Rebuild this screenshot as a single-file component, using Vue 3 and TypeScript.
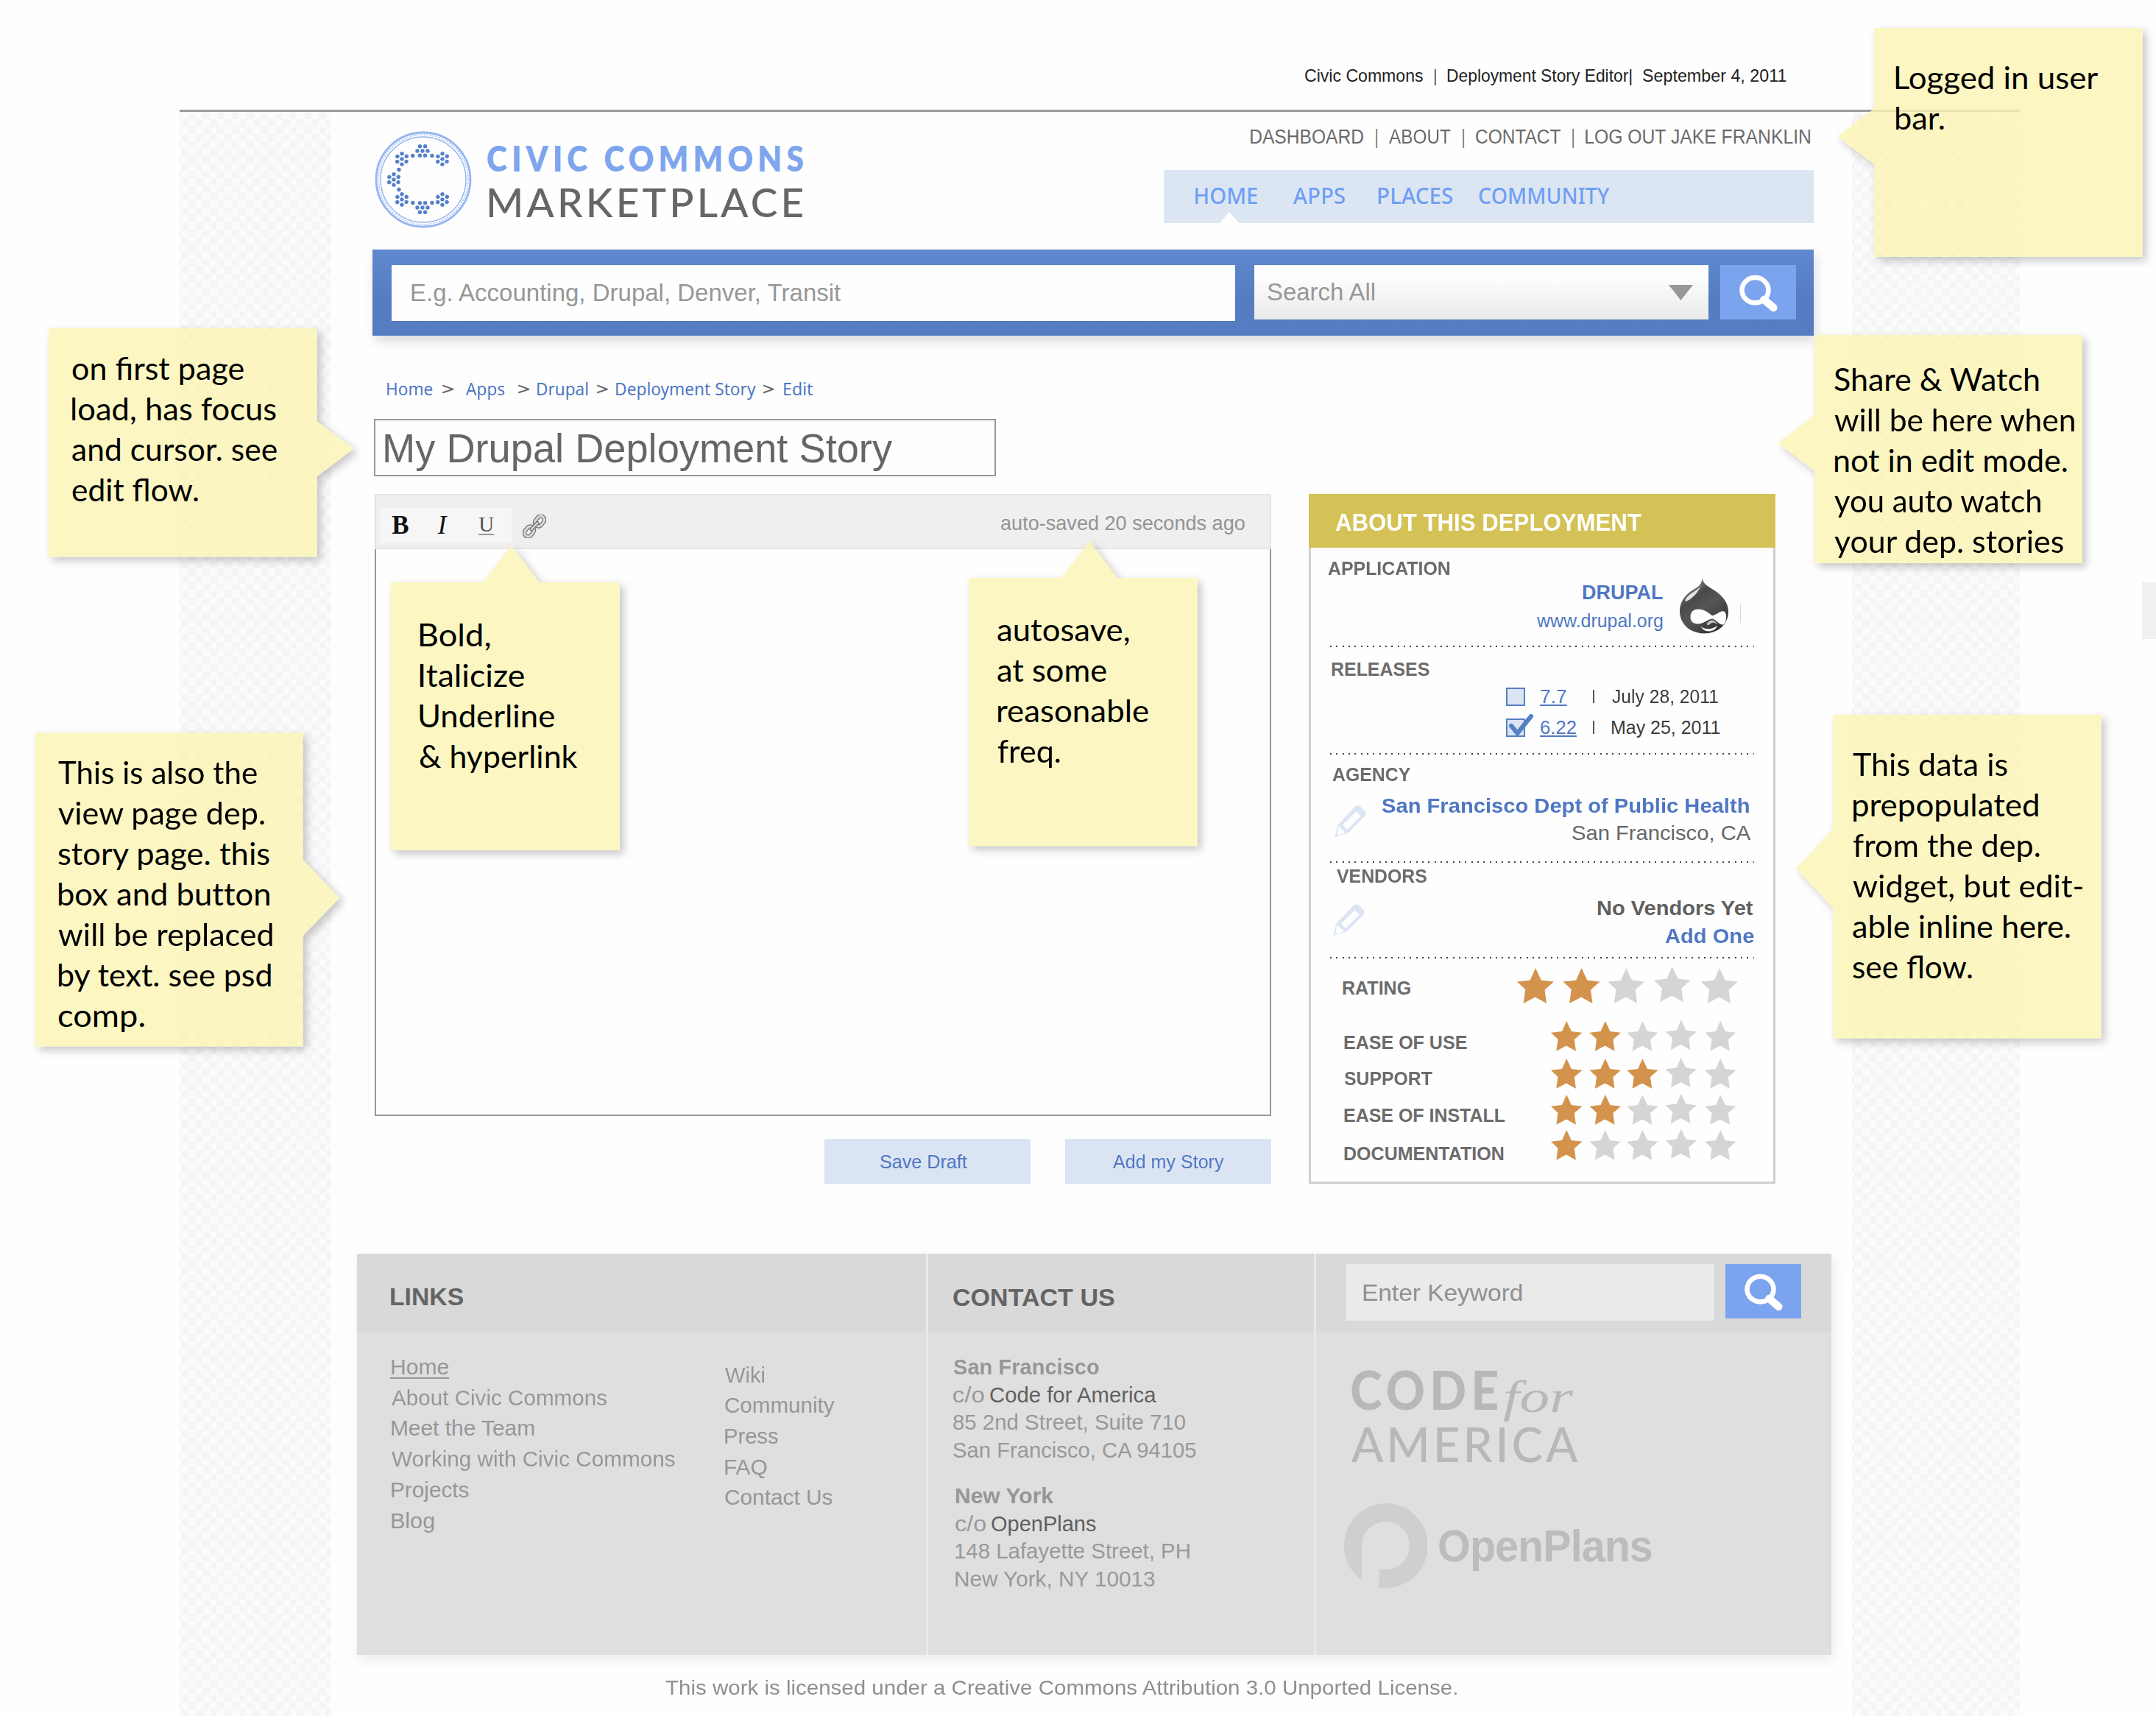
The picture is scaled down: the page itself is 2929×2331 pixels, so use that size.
<script setup lang="ts">
import { defineComponent, h, type Directive } from 'vue'

// Stretches a line of text so that its visible glyphs span exactly the given width.
const ctx = document.createElement('canvas').getContext('2d')!
const vFit: Directive<HTMLElement, number> = {
  mounted(el, { value }) {
    const cs = getComputedStyle(el)
    ctx.font = `${cs.fontStyle} ${cs.fontWeight} ${cs.fontSize} ${cs.fontFamily}`
    ctx.letterSpacing = cs.letterSpacing === 'normal' ? '0px' : cs.letterSpacing
    const m = ctx.measureText((el.textContent ?? '').trim())
    const ink = m.actualBoundingBoxLeft + m.actualBoundingBoxRight
    const s = value / ink
    const natural = el.offsetWidth
    el.style.marginRight = `${value - natural}px`
    el.style.transform = `translateX(${m.actualBoundingBoxLeft * s}px) scaleX(${s})`
  },
}

interface Note {
  x: number; y: number; w: number; h: number
  side: 'left' | 'right' | 'top'
  at: number; half: number
  tx: number; ty: number
  lines: [string, number][]
}

const notes: Note[] = [
  { x: 2546, y: 38, w: 364.5, h: 311, side: 'left', at: 147.3, half: 37.7, tx: 29, ty: 40, lines: [['Logged in user', 275], ['bar.', 66]] },
  { x: 2465, y: 455, w: 364, h: 310, side: 'left', at: 147, half: 37.5, tx: 27, ty: 32.5, lines: [['Share & Watch', 278], ['will be here when', 327], ['not in edit mode.', 316], ['you auto watch', 281], ['your dep. stories', 312]] },
  { x: 2489.7, y: 971.4, w: 364.5, h: 439.6, side: 'left', at: 208.6, half: 53.4, tx: 27, ty: 40, lines: [['This data is', 210], ['prepopulated', 252], ['from the dep.', 254], ['widget, but edit-', 312], ['able inline here.', 295], ['see flow.', 162]] },
  { x: 65.7, y: 446.4, w: 364.6, h: 310.4, side: 'right', at: 163.6, half: 37.7, tx: 32.5, ty: 27, lines: [['on first page', 233], ['load, has focus', 277], ['and cursor. see', 278], ['edit flow.', 171]] },
  { x: 48, y: 995, w: 363.5, h: 426.5, side: 'right', at: 224.5, half: 51.7, tx: 31, ty: 27, lines: [['This is also the', 270], ['view page dep.', 281], ['story page. this', 288], ['box and but\u200cton', 287], ['will be replaced', 291], ['by text. see psd', 290], ['comp.', 117]] },
  { x: 531, y: 791, w: 311, h: 364, side: 'top', at: 163.5, half: 38, tx: 38.5, ty: 43.5, lines: [['Bold,', 96], ['Italicize', 142], ['Underline', 183], ['& hyperlink', 215]] },
  { x: 1316, y: 784.7, w: 310.7, h: 364.3, side: 'top', at: 164, half: 38, tx: 39.3, ty: 43.5, lines: [['autosave,', 179], ['at some', 148], ['reasonable', 205], ['freq.', 85]] },
]

const PAD = 60
const ARROW = 50
function outline(n: Note): string {
  const l = PAD, t = PAD, r = PAD + n.w, b = PAD + n.h
  const a = PAD + n.at
  if (n.side === 'left') return `M${l} ${t}H${r}V${b}H${l}V${a + n.half}L${l - ARROW} ${a}L${l} ${a - n.half}Z`
  if (n.side === 'right') return `M${l} ${t}H${r}V${a - n.half}L${r + ARROW} ${a}L${r} ${a + n.half}V${b}H${l}Z`
  return `M${l} ${t}H${a - n.half}L${a} ${t - ARROW}L${a + n.half} ${t}H${r}V${b}H${l}Z`
}

const crumbs: [string, number, number][] = [
  ['Home', 62, 1], ['>', 16, 12.7], ['Apps', 53, 16], ['>', 16, 17.5], ['Drupal', 69, 10],
  ['>', 15.5, 11], ['Deployment Story', 189.5, 11], ['>', 15, 10], ['Edit', 39, 12.5],
]

const STAR = '25,0 32.8,16.5 50,18.5 37.5,29.5 40,48 24.6,39.4 8.6,48 11.2,29.1 0,18.5 17.7,16.5'
const bigStars = [0, 62.5, 123.2, 185.7, 249.9]
const smallStars = [0, 52.6, 103.2, 155.6, 209]
const ratings = [
  { label: 'EASE OF USE', w: 167, on: 2, gap: 24.3, drop: 8.5 },
  { label: 'SUPPORT', w: 120, on: 3, gap: 9.9, drop: 7 },
  { label: 'EASE OF INSTALL', w: 219, on: 2, gap: 9.1, drop: 7.5 },
  { label: 'DOCUMENTATION', w: 217, on: 1, gap: 6.9, drop: 12 },
]

const linksA: [string, number][] = [['Home', 77], ['About Civic Commons', 292.5], ['Meet the Team', 194.5], ['Working with Civic Commons', 385], ['Projects', 105], ['Blog', 58]]
const linksB: [string, number][] = [['Wiki', 53.5], ['Community', 149], ['Press', 72], ['FAQ', 57], ['Contact Us', 146]]

// Logo: hexagonal dot clusters arranged along an open "C".
const hex = [[0, 0], [-7, 0], [7, 0], [-3.6, -6.3], [3.6, -6.3], [-3.6, 6.3], [3.6, 6.3]]
const clusters = [[65, 27, 0], [92, 38, 30], [37, 38, 30], [26, 66, 30], [37, 93, 30], [65, 104, 0], [92, 93, 30]]
const joints = [[51.8, 33.5], [78, 33.5], [33, 52.5], [33, 79.5], [51.8, 97.5], [78, 97.5]]

const Magnifier = defineComponent({
  setup: () => () =>
    h('svg', { width: 103, height: 74, viewBox: '0 0 103 74' }, [
      h('ellipse', { cx: 47.5, cy: 34.2, rx: 18, ry: 17.2, fill: 'none', stroke: '#fff', 'stroke-width': 6.6 }),
      h('path', { d: 'M59.5 47L72.3 58', stroke: '#fff', 'stroke-width': 10.5, 'stroke-linecap': 'round', fill: 'none' }),
    ]),
})
const Pencil = defineComponent({
  setup: () => () =>
    h('svg', { width: 43, height: 43, viewBox: '0 0 43 43' }, [
      h('path', {
        fill: '#dbe5f4', 'fill-rule': 'evenodd',
        d: 'M0 43L4.5 26.500L27 2.500Q31.500-1.500 35.500 2L41 7.500Q44.500 11 41 15L18 38Z M11 26.500L17 33L35.500 14.500L29.500 8.500Z M5.500 28L3.500 38.500L6 41L14.500 37Z',
      }),
    ]),
})
</script>

<template>
  <div class="page">
    <div class="topbar">
      <span v-fit="160.500">Civic Commons</span><span v-fit="2">|</span>
      <span v-fit="251">Deployment Story Editor|</span><span v-fit="195">September 4, 2011</span>
    </div>
    <div class="frame">
      <div class="sheet">
        <header class="header">
          <svg class="seal" width="132" height="132" viewBox="0 0 132 132">
            <g fill="none" stroke="#94b5f2">
              <circle cx="66" cy="66" r="64" stroke-width="2.800" />
              <circle cx="66" cy="66" r="61" stroke-width="2" stroke-dasharray="2 2" opacity=".7" />
              <circle cx="66" cy="66" r="58" stroke-width="1.500" />
            </g>
            <g fill="#5580c8">
              <g v-for="(c, i) in clusters" :key="i" :transform="`translate(${c[0]} ${c[1]}) rotate(${c[2]})`">
                <circle v-for="(d, j) in hex" :key="j" :cx="d[0]" :cy="d[1]" r="2.700" />
              </g>
              <circle v-for="(d, i) in joints" :key="i" :cx="d[0]" :cy="d[1]" r="2.700" />
            </g>
          </svg>
          <div class="wordmark">
            <div class="civic"><span v-fit="429.500">CIVIC COMMONS</span></div>
            <div class="market"><span v-fit="426">MARKETPLACE</span></div>
          </div>
          <div class="head-right">
            <div class="user">
              <span v-fit="153.500">DASHBOARD</span><span v-fit="2">|</span><span v-fit="83.500">ABOUT</span><span v-fit="2">|</span>
              <span v-fit="115">CONTACT</span><span v-fit="2">|</span><span v-fit="306">LOG OUT JAKE FRANKLIN</span>
            </div>
            <nav class="nav">
              <div class="tab home"><span v-fit="84">HOME</span></div>
              <div class="tab apps"><span v-fit="70">APPS</span></div>
              <div class="tab places"><span v-fit="101">PLACES</span></div>
              <div class="tab"><span v-fit="178">COMMUNITY</span></div>
            </nav>
          </div>
        </header>

        <div class="search">
          <div class="field"><span v-fit="585.500">E.g. Accounting, Drupal, Denver, Transit</span></div>
          <div class="select">
            <span v-fit="147.500">Search All</span>
            <svg width="33" height="21" viewBox="0 0 33 21"><path d="M0 0H33L16.500 21Z" fill="#979797" /></svg>
          </div>
          <div class="go"><Magnifier /></div>
        </div>

        <div class="crumbs">
          <div v-for="(c, i) in crumbs" :key="i" :class="{ sep: c[0] === '>' }" :style="{ marginLeft: c[2] + 'px' }">
            <span v-fit="c[1]">{{ c[0] }}</span>
          </div>
        </div>

        <div class="title"><span v-fit="689.500">My Drupal Deployment Story</span></div>

        <div class="columns">
          <div class="editor">
            <div class="toolbar">
              <div class="tools"><b>B</b><i>I</i><u>U</u></div>
              <svg class="chain" width="32" height="32" viewBox="0 0 32 32" fill="none">
                <g stroke="#777" stroke-width="5.600">
                  <rect x="-5" y="-7.500" width="10" height="15" rx="5" transform="translate(23 9) rotate(38)" />
                  <rect x="-5" y="-7.500" width="10" height="15" rx="5" transform="translate(9 23) rotate(38)" />
                </g>
                <g stroke="#dcdcdc" stroke-width="2.800">
                  <rect x="-5" y="-7.500" width="10" height="15" rx="5" transform="translate(23 9) rotate(38)" />
                  <rect x="-5" y="-7.500" width="10" height="15" rx="5" transform="translate(9 23) rotate(38)" />
                </g>
                <path d="M12 20L20 11.500" stroke="#777" stroke-width="5" stroke-linecap="round" />
                <path d="M12 20L20 11.500" stroke="#ddd" stroke-width="2.200" stroke-linecap="round" />
              </svg>
              <div class="saved"><span v-fit="331.500">auto-saved 20 seconds ago</span></div>
            </div>
            <div class="canvas"></div>
            <div class="actions">
              <div class="btn draft"><span v-fit="118.500">Save Draft</span></div>
              <div class="btn"><span v-fit="150.500">Add my Story</span></div>
            </div>
          </div>

          <aside class="panel">
            <div class="panel-head"><span v-fit="416">ABOUT THIS DEPLOYMENT</span></div>
            <section class="s1">
              <div class="label"><span v-fit="166">APPLICATION</span></div>
              <div class="app">
                <div class="app-text">
                  <div class="app-name"><span v-fit="109">DRUPAL</span></div>
                  <div class="app-url"><span v-fit="171.500">www.drupal.org</span></div>
                </div>
                <svg width="90" height="80" viewBox="0 0 90 80">
                  <defs>
                    <linearGradient id="drop" x1="0" y1="0" x2=".7" y2="1">
                      <stop offset=".12" stop-color="#8d8d8d" /><stop offset=".38" stop-color="#4a4a4a" />
                      <stop offset=".6" stop-color="#565656" /><stop offset="1" stop-color="#333" />
                    </linearGradient>
                  </defs>
                  <path d="M36.500 2.500C38 12 48 15 56 21C67 29 72 38 72 48C72 65 58 77.500 39 77.500C20 77.500 6 65 6 47C6 36 11 28 20 21C28 15.500 36 13 36.500 2.500Z" fill="url(#drop)" />
                  <path d="M35.500 9C34 17 27 19 21 23.500C14 29 12.500 33 14 33.500C18 34.500 33 22 35.500 9Z" fill="#e4e4e4" />
                  <path d="M50 53.500C45 49 39 44.500 31 44.500C24 44.500 20.500 49 20.500 55C20.500 61 24.500 65 31.500 64.500C39.500 64 43 58.500 50 57.500C56 59 60 66.500 65 65.500C68 64.500 69.500 58 69 53C68.500 48 66 46.500 62.500 47.500C58 49 54.500 52.500 50 53.500Z" fill="#fff" />
                  <path d="M42.500 65C44.500 60.500 49 58.500 52 60C55 61.500 57 64 57.500 65.500C55 63.500 53 62.500 50.500 62.700C48.500 63 46 66 44.500 66.500Z" fill="#ededed" opacity=".75" />
                  <path d="M35 68C40 72.500 51 72.500 57 66.500C56 72 50 74.500 45 74.500C40 74.500 36 71.500 35 68Z" fill="#f2f2f2" />
                  <path d="M88.500 37V63" stroke="#d8d8d8" stroke-width="1" />
                </svg>
              </div>
            </section>
            <div class="dots"></div>
            <section class="s2">
              <div class="label"><span v-fit="133">RELEASES</span></div>
              <div class="release">
                <div class="box"></div>
                <div class="ver"><span v-fit="34.700">7.7</span></div>
                <div class="bar"></div><span v-fit="144">July 28, 2011</span>
              </div>
              <div class="release">
                <div class="box">
                  <svg class="tick" width="38" height="32" viewBox="0 0 38 32"><path d="M5 17L13.500 27L32 4" fill="none" stroke="#5580c6" stroke-width="6" stroke-linecap="round" stroke-linejoin="round" /></svg>
                </div>
                <div class="ver"><span v-fit="48">6.22</span></div>
                <div class="bar"></div><span v-fit="146.500">May 25, 2011</span>
              </div>
            </section>
            <div class="dots"></div>
            <section class="s3">
              <div class="label"><span v-fit="106">AGENCY</span></div>
              <div class="entry">
                <Pencil />
                <div class="entry-text">
                  <div class="blue"><span v-fit="499">San Francisco Dept of Public Health</span></div>
                  <div class="plain"><span v-fit="242.500">San Francisco, CA</span></div>
                </div>
              </div>
            </section>
            <div class="dots"></div>
            <section class="s4">
              <div class="label"><span v-fit="122.500">VENDORS</span></div>
              <div class="entry">
                <Pencil />
                <div class="entry-text">
                  <div class="none"><span v-fit="212.500">No Vendors Yet</span></div>
                  <div class="blue"><span v-fit="120.500">Add One</span></div>
                </div>
              </div>
            </section>
            <div class="dots"></div>
            <section class="s5">
              <div class="rate big">
                <div class="label"><span v-fit="92">RATING</span></div>
                <svg width="300" height="49" viewBox="0 0 300 49">
                  <polygon v-for="(x, i) in bigStars" :key="i" :points="STAR" :fill="i < 2 ? '#d3934c' : '#d5d5d5'" :transform="`translate(${x} ${i === 3 ? -1.900 : 0})`" />
                </svg>
              </div>
              <div v-for="r in ratings" :key="r.label" class="rate" :style="{ marginTop: r.gap + 'px' }">
                <div class="label" :style="{ paddingTop: r.drop + 'px' }"><span v-fit="r.w">{{ r.label }}</span></div>
                <svg width="251.500" height="41" viewBox="0 0 251.500 41">
                  <polygon v-for="(x, i) in smallStars" :key="i" :points="STAR" :fill="i < r.on ? '#d3934c' : '#d5d5d5'" :transform="`translate(${x} ${i === 3 ? -1.500 : 0}) scale(.848)`" />
                </svg>
              </div>
            </section>
          </aside>
        </div>

        <footer class="footer">
          <div class="fcol c1">
            <div class="fhead"><span v-fit="98.500">LINKS</span></div>
            <div class="lists">
              <div class="list">
                <div v-for="(l, i) in linksA" :key="l[0]" :class="{ on: i === 0 }"><span v-fit="l[1]">{{ l[0] }}</span></div>
              </div>
              <div class="list second">
                <div v-for="l in linksB" :key="l[0]"><span v-fit="l[1]">{{ l[0] }}</span></div>
              </div>
            </div>
          </div>
          <div class="fcol c2">
            <div class="fhead"><span v-fit="219">CONTACT US</span></div>
            <div class="address">
              <div><b v-fit="198">San Francisco</b></div>
              <div class="co"><span v-fit="41.700">c/o</span><em v-fit="228">Code for America</em></div>
              <div><span v-fit="315">85 2nd Street, Suite 710</span></div>
              <div><span v-fit="331">San Francisco, CA 94105</span></div>
            </div>
            <div class="address ny">
              <div><b v-fit="134.500">New York</b></div>
              <div class="co"><span v-fit="41">c/o</span><em v-fit="142">OpenPlans</em></div>
              <div><span v-fit="318">148 Lafayette Street, PH</span></div>
              <div><span v-fit="271.500">New York, NY 10013</span></div>
            </div>
          </div>
          <div class="fcol c3">
            <div class="fhead">
              <div class="keyword"><span v-fit="215.500">Enter Keyword</span></div>
              <div class="go"><Magnifier /></div>
            </div>
            <div class="cfa">
              <div class="cfa-top"><span class="code" v-fit="198">CODE</span><span class="for" v-fit="96">for</span></div>
              <div class="america"><span v-fit="308">AMERICA</span></div>
            </div>
            <div class="op">
              <svg width="114" height="116" viewBox="0 0 114 116">
                <path d="M25 104.500A57 57.500 0 1 1 57 115H48.500V90H57A32.500 32.500 0 1 0 25 57.500Z" fill="#cfcfcf" />
              </svg>
              <span v-fit="289">OpenPlans</span>
            </div>
          </div>
        </footer>
        <div class="license"><span v-fit="1077">This work is licensed under a Creative Commons Attribution 3.0 Unported License.</span></div>
      </div>
    </div>

    <div class="edge-tab"></div>

    <div v-for="(n, i) in notes" :key="i" class="note" :style="{ left: n.x + 'px', top: n.y + 'px', width: n.w + 'px', height: n.h + 'px' }">
      <svg class="note-bg" :width="n.w + 2 * PAD" :height="n.h + 2 * PAD">
        <clipPath :id="`out${i}`">
          <path clip-rule="evenodd" :d="`M0 0H${n.w + 2 * PAD}V${n.h + 2 * PAD}H0Z ${outline(n)}`" />
        </clipPath>
        <g :clip-path="`url(#out${i})`"><path class="shade" :d="outline(n)" transform="translate(5 5)" /></g>
        <path :d="outline(n)" fill="rgb(251,245,181)" fill-opacity=".82" />
      </svg>
      <div class="note-text" :style="{ paddingLeft: n.tx + 'px', paddingTop: n.ty + 'px' }">
        <div v-for="l in n.lines" :key="l[0]"><span v-fit="l[1]">{{ l[0] }}</span></div>
      </div>
    </div>
  </div>
</template>

<style>
body { margin: 0; background: #fefefe; }
</style>

<style scoped>
.page {
  position: relative;
  width: 2929px;
  height: 2331px;
  overflow: hidden;
  background: #fefefe;
  font-family: "Liberation Sans", Arial, sans-serif;
}
.page span, .page b, .page em {
  display: inline-block;
  flex: none;
  white-space: pre;
  transform-origin: 0 50%;
}
.page svg { display: block; flex: none; }
.topbar {
  box-sizing: border-box;
  height: 149px;
  padding: 83px 0 0 1773px;
  display: flex;
  gap: 15px;
  font-size: 24px;
  line-height: 40px;
  color: #222;
}
.frame {
  box-sizing: border-box;
  margin-left: 244px;
  width: 2500px;
  height: 2182px;
  padding-left: 206px;
  border-top: 3px solid #9b9b9b;
  background: conic-gradient(#f5f5f5 25%, #fbfbfb 0 50%, #f5f5f5 0 75%, #fbfbfb 0) 2px 0 / 19.700px 20px;
}
.sheet { width: 2066px; height: 2182px; background: #fefefe; }

.header { display: flex; height: 187px; padding-left: 59px; }
.seal { margin-top: 26px; }
.wordmark { width: 432px; margin-left: 21px; padding-top: 38px; font-family: Lato, sans-serif; }
.civic { height: 50px; font-size: 48px; line-height: 50px; font-weight: 800; letter-spacing: 7px; color: #7ea5ee; }
.market { margin: 5.500px 0 0 2px; font-size: 54px; line-height: 58px; font-weight: 500; letter-spacing: 4px; color: #666; }
.head-right { margin-left: 487px; padding-top: 18.500px; width: 883px; }
.user { display: flex; gap: 16.300px; padding-left: 118px; font-size: 27px; line-height: 30px; color: #6a6a6a; }
.nav {
  box-sizing: border-box;
  display: flex;
  margin-top: 30.500px;
  height: 72px;
  padding: 11.500px 0 0 42.700px;
  background: #dce6f2;
  font: 500 31.500px/44px "Noto Sans", sans-serif;
  color: #6f9ff6;
}
.tab { position: relative; }
.home { margin-right: 49.500px; }
.apps { margin-right: 45px; }
.places { margin-right: 35.500px; }
.home::after {
  content: "";
  position: absolute;
  left: 33px;
  top: 45.500px;
  border: 13px solid transparent;
  border-top: 0;
  border-bottom: 15px solid #fefefe;
}

.search {
  box-sizing: border-box;
  display: flex;
  margin-left: 56px;
  width: 1958px;
  height: 117px;
  padding: 21px 0 0 26px;
  background: linear-gradient(#5f88ce, #557cc0 60%, #567dc1);
  box-shadow: 3px 8px 14px rgba(0, 0, 0, .13);
  font-size: 33px;
  color: #979797;
}
.field { box-sizing: border-box; width: 1145.500px; height: 76px; padding-left: 26.600px; line-height: 76px; background: #fefefe; }
.select {
  box-sizing: border-box;
  display: flex;
  align-items: center;
  justify-content: space-between;
  width: 617px;
  height: 74px;
  margin-left: 26.500px;
  padding: 0 21px 0 17.600px;
  line-height: 78px;
  background: linear-gradient(#fefefe 20%, #e9e9e9);
}
.go { width: 103px; height: 74px; margin-left: 16px; background: #7ca3ed; }

.crumbs {
  display: flex;
  margin-top: 56.500px;
  padding-left: 75.300px;
  font: 23.500px/30px "Noto Sans", sans-serif;
  color: #4f77c3;
}
.crumbs .sep { color: #666; font-weight: 500; }
.title {
  box-sizing: border-box;
  margin: 26px 0 0 58.200px;
  width: 845px;
  height: 78px;
  padding-left: 13px;
  border: 2px solid #999;
  font-size: 55px;
  line-height: 77px;
  color: #666;
}

.columns { display: flex; height: 1032px; margin-top: 24.500px; padding-left: 58.700px; }
.editor { width: 1218.300px; }
.toolbar {
  box-sizing: border-box;
  display: flex;
  height: 75px;
  border: 2px solid #e5e5e5;
  background: #efefef;
}
.tools {
  box-sizing: border-box;
  display: flex;
  margin: 17px 0 0 6px;
  width: 178px;
  height: 48px;
  padding: 6px 0 0 15.500px;
  background: #f6f6f6;
  font: 35px/36px "Liberation Serif", serif;
  color: #111;
}
.tools b { width: 62.500px; }
.tools i { width: 55.500px; }
.tools u { font-size: 29px; line-height: 32px; color: #555; text-decoration-color: #999; text-decoration-thickness: 2px; text-underline-offset: 3px; }
.chain { margin: 26px 0 0 15px; }
.saved { margin: 14.500px 34px 0 auto; font-size: 27.500px; line-height: 46px; color: #939393; }
.canvas { box-sizing: border-box; height: 770px; border: 2px solid #999; border-top: 0; }
.actions { display: flex; justify-content: flex-end; gap: 47px; margin-top: 31px; }
.btn { box-sizing: border-box; width: 280px; height: 61px; background: #dbe4f2; text-align: center; font-size: 26px; line-height: 62px; color: #4f77c3; }
.draft { padding-right: 10px; }

.panel {
  box-sizing: border-box;
  width: 633.600px;
  height: 936.500px;
  margin-left: 51.200px;
  border: 3px solid #cfcfcf;
  border-top: 0;
  background: #fefefe;
}
.panel-head {
  margin: 0 -3px;
  height: 73px;
  padding-left: 35.500px;
  background: #d4c257;
  color: #fff;
  font-size: 32.500px;
  font-weight: bold;
  line-height: 78px;
}
.panel section { box-sizing: border-box; display: flow-root; }
.dots { height: 2px; margin: 0 26px 0 26px; background: repeating-linear-gradient(90deg, #444 0 2px, transparent 2px 8.330px); }
.label { font-size: 26px; font-weight: bold; line-height: 30px; color: #6c6c6c; }
.s1 { height: 132.500px; padding: 12.700px 0 0 23px; }
.s2 { height: 144.500px; padding: 15.200px 0 0 28px; }
.s3 { height: 145.300px; padding: 12px 0 0 29px; }
.s4 { height: 127.400px; padding: 2.700px 0 0 35.200px; }
.app { display: flex; justify-content: flex-end; gap: 17px; margin-right: 43px; margin-top: -4px; }
.app-text { display: flex; flex-direction: column; align-items: flex-end; padding-top: 5px; color: #4f77c3; }
.app-name { font-size: 27px; font-weight: bold; line-height: 34px; }
.app-url { margin-top: 2.200px; font-size: 26px; line-height: 38px; }
.release { display: flex; height: 42px; margin-left: 236.500px; font-size: 25px; line-height: 30px; color: #3c3c3c; }
.s2 .label { margin-bottom: 7.300px; }
.box { position: relative; box-sizing: border-box; width: 26px; height: 25.500px; margin: 3px 21.600px 0 0; border: 2px solid #5580c6; background: #dbe4f2; }
.tick { position: absolute; left: 0; top: -9px; }
.ver { width: 70.400px; color: #4f77c3; }
.ver span { text-decoration: underline; text-decoration-thickness: 2px; text-underline-offset: 2px; }
.bar { width: 2px; height: 18px; margin: 6px 24.400px 0 0; background: #555; }
.entry { display: flex; justify-content: space-between; margin-top: 8px; font-size: 28.500px; font-weight: bold; line-height: 38px; }
.entry-text { display: flex; flex-direction: column; align-items: flex-end; }
.s3 .entry { margin-left: 2.500px; margin-right: 29.500px; }
.s3 svg { margin-top: 19px; }
.s3 .blue { margin-right: 2.500px; }
.s4 .entry { margin-left: -5.500px; margin-right: 27px; margin-top: 9px; }
.s4 svg { margin-top: 14px; }
.blue { color: #4f77c3; }
.plain { color: #666; font-weight: normal; font-size: 28px; }
.none { color: #5f5f5f; }
.rate { display: flex; justify-content: space-between; height: 40.500px; margin-right: 50px; padding-left: 44.500px; }
.rate .label { line-height: 41px; }
.rate svg { overflow: visible; }
.rate.big { height: 48.300px; margin-top: 13px; margin-right: 47.500px; padding-left: 43px; }
.rate.big .label { line-height: 54px; }

.footer {
  display: flex;
  margin-left: 35px;
  width: 2002.800px;
  height: 545.300px;
  background: #dfdfdf;
  box-shadow: 3px 6px 16px rgba(0, 0, 0, .08);
}
.fcol { box-sizing: border-box; border-right: 3px solid #e9e9e9; }
.c1 { width: 776px; }
.c2 { width: 527px; }
.c3 { width: 699.800px; border: 0; }
.fhead {
  box-sizing: border-box;
  height: 105.500px;
  padding: 37.500px 0 0 45.500px;
  background: #d9d9d9;
  font-size: 34px;
  font-weight: bold;
  line-height: 40px;
  color: #646464;
}
.c2 .fhead { padding: 39px 0 0 33.500px; }
.c3 .fhead { display: flex; padding: 14px 0 0 41px; font-weight: normal; }
.lists { display: flex; padding: 28.500px 0 0 46.500px; font-size: 29px; line-height: 41.700px; color: #979797; }
.list { width: 453px; }
.list.second { padding-top: 10.500px; width: auto; }
.on span { text-decoration: underline; text-decoration-thickness: 2px; text-underline-offset: 4px; }
.address { padding: 30.500px 0 0 33.500px; font-size: 29px; line-height: 37.500px; color: #999; }
.address.ny { padding: 25px 0 0 36.500px; }
.co { display: flex; gap: 9px; }
.co em { font-style: normal; color: #5f5f5f; }
.address b { color: #969696; }
.keyword { box-sizing: border-box; width: 500px; height: 77px; padding-left: 22.700px; background: #eaeaea; font-size: 32px; line-height: 78px; color: #909090; }
.c3 .go { margin-left: 15px; }
.cfa { padding: 36px 0 0 47.700px; font-family: Lato, sans-serif; color: #b8b8b8; }
.cfa-top { display: flex; height: 90px; }
.code { font-size: 72px; line-height: 84px; font-weight: 900; letter-spacing: 7px; }
.for { margin-left: 8px; font: italic 62px/104px "Liberation Serif", serif; }
.america { margin-top: -9px; height: 77px; font-size: 65px; line-height: 70px; font-weight: 500; letter-spacing: 4px; }
.op { display: flex; margin: 39px 0 0 36.700px; font-size: 61px; font-weight: bold; line-height: 116px; color: #bcbcbc; }
.op span { margin-left: 16px; letter-spacing: -1px; }
.license { padding: 24px 0 0 454px; font-size: 28.500px; line-height: 40px; color: #8f8f8f; }

.edge-tab { position: absolute; left: 2909.500px; top: 791px; width: 20px; height: 77px; background: #f0f0f0; }

.note { position: absolute; }
.note-bg { position: absolute; left: -60px; top: -60px; }
.shade { fill: rgba(0, 0, 0, .22); filter: blur(6px); }
.note-text { position: relative; font: 42px/55px Lato, sans-serif; color: #000; }
</style>
